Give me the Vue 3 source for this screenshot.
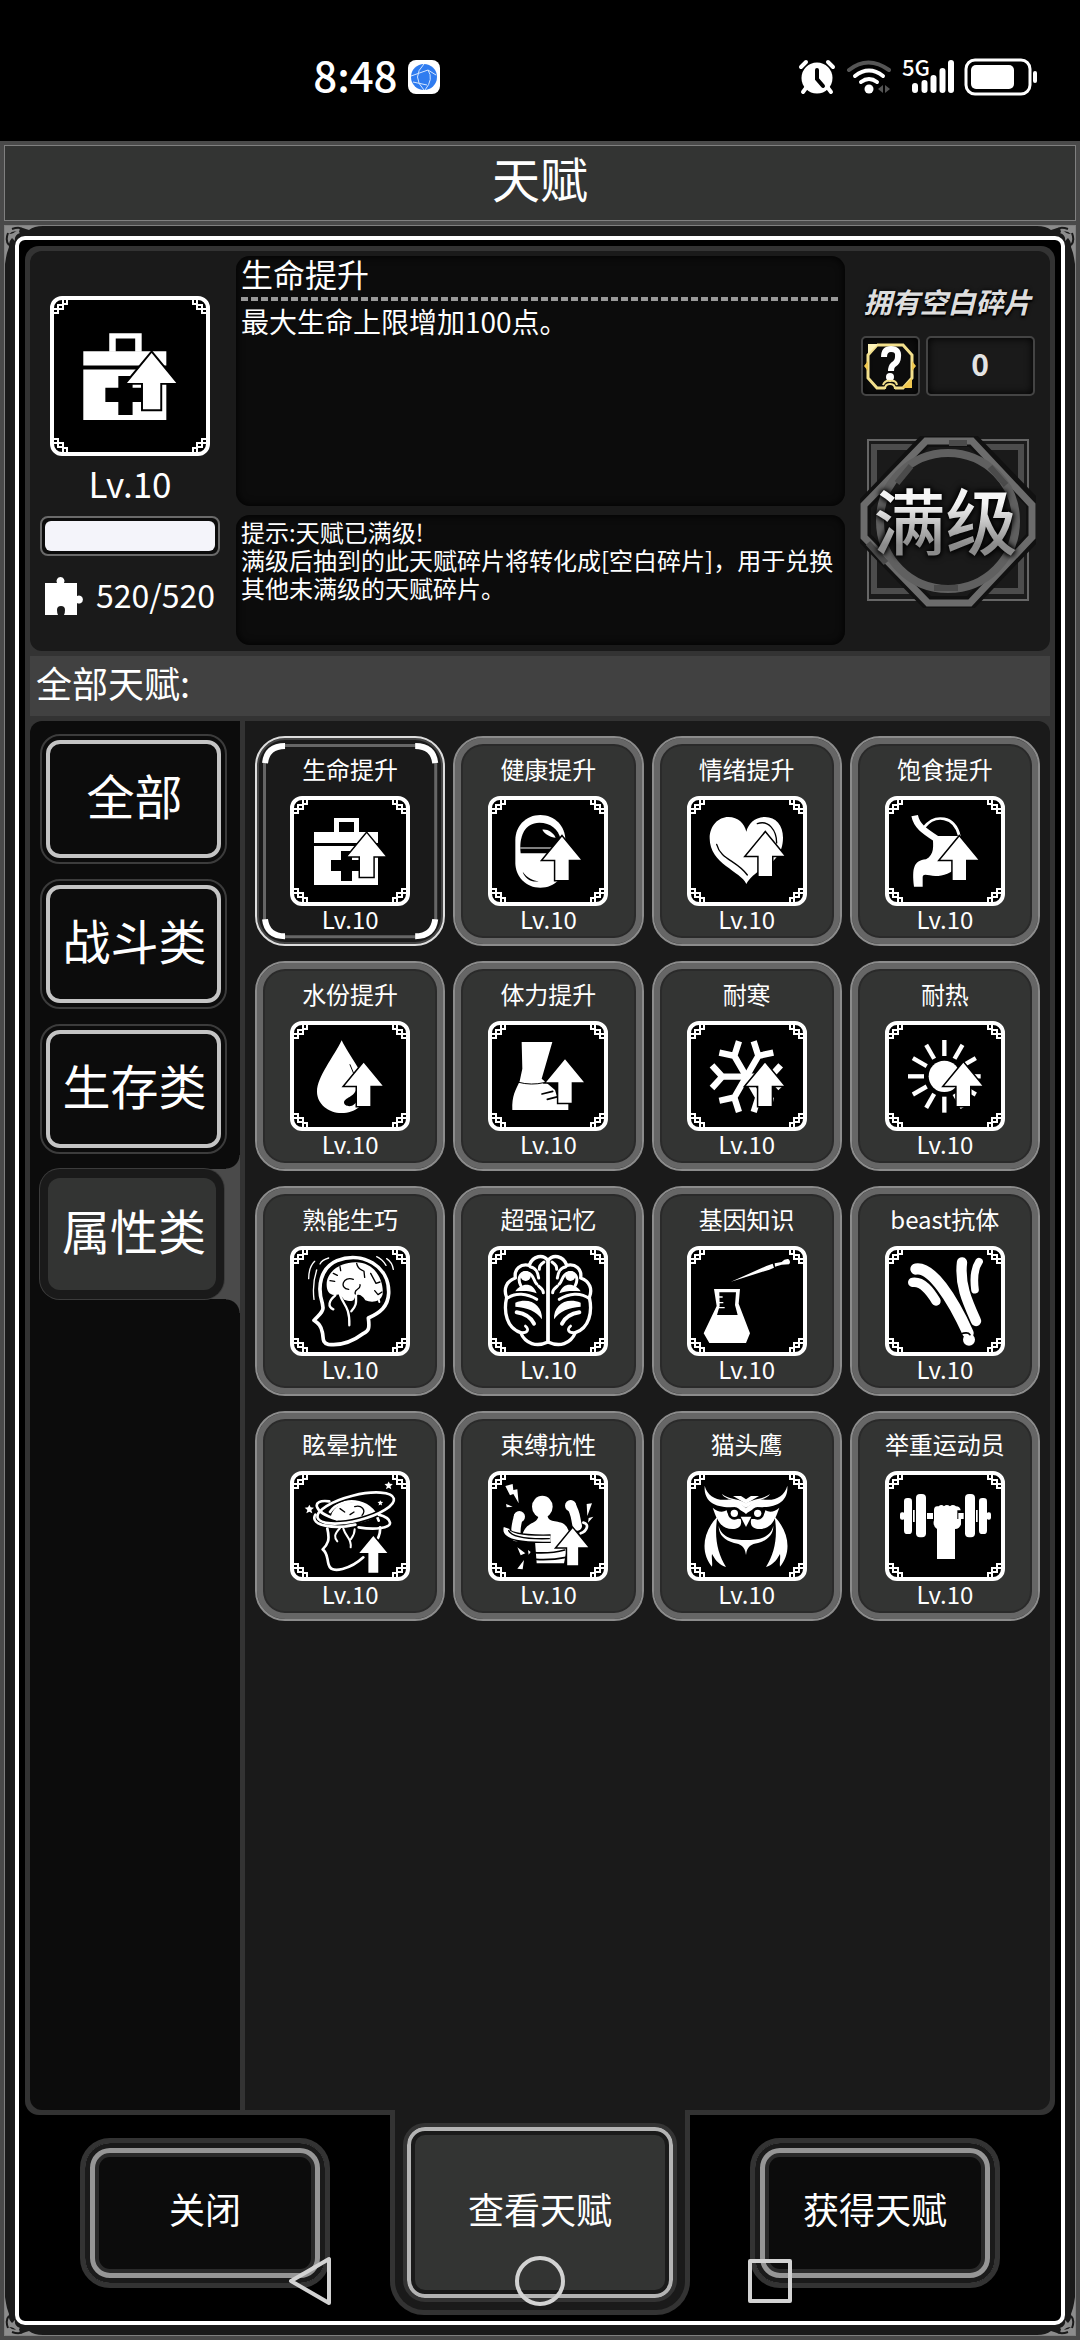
<script setup>
import { ref } from 'vue'

const arrow = (x, y, k = 1, drop = 61) =>
  `<path d="M${x} ${y}l${57 * k} ${69 * k}h${-37 * k}v${drop}h${-40 * k}v${-drop}h${-37 * k}z" fill="#fff" stroke="#000" stroke-width="9" paint-order="stroke"/>`

const mirror = (axis, art) => `${art}<g transform="translate(${axis * 2} 0) scale(-1 1)">${art}</g>`

const line = (d, w, color = '#fff', cap = 'round') =>
  `<path d="${d}" fill="none" stroke="${color}" stroke-width="${w}" stroke-linecap="${cap}" stroke-linejoin="round"/>`

const spin = (count, cx, cy, art) =>
  Array.from({ length: count }, (_, i) => `<g transform="rotate(${(360 / count) * i} ${cx} ${cy})">${art}</g>`).join('')

const medkit = `
  <path fill-rule="evenodd" d="M282 294h75v43h-75zM297 306v31h45v-31z"/>
  <path d="M222 336h192v33H222zM222 378h192v117H222z"/>
  <path fill="#000" d="M303 393h33v27h32v33h-32v30h-33v-30h-30v-33h30z"/>${arrow(380, 340)}`

const pill = `
  <path d="M826 360c0-42 32-75 75-75s75 33 75 75v68c0 42-32 75-75 75s-75-33-75-75z"/>
  <path fill="#000" d="M842 400c-6-50 12-92 56-92 34 0 56 20 64 48v44z"/>
  ${line('M842 384h110', 3)}
  <path d="M907 329c16-2 32 8 40 24-16-2-32-10-40-24z"/>
  <path fill="#000" d="M848 455c14 20 32 26 48 29-20 4-42-8-48-29z"/>${arrow(966, 350)}`

const heart = `
  <path d="M319 492c-16-38-110-60-110-137 0-38 26-64 56-64s48 20 54 44c6-24 26-44 56-44 33 0 54 26 54 62 0 50-30 74-60 92-24 16-40 29-50 47z"/>
  ${line('M230 373c12 46 60 48 92 92', 4, '#000')}
  ${line('M352 311c34-12 58 20 58 58', 4, '#000')}${arrow(376, 338)}`

const stomach = `
  ${line('M824 287c6 30 26 44 66 70', 20, '#fff', 'butt')}
  ${line('M852 322c34-42 92-34 106 26', 8)}
  <path d="M878 348h80v86c-24 26-48 34-72 34-22 0-40-12-38 8v24h-26c-6-54-2-78 36-82 26-14 22-40 20-70z"/>${arrow(958, 350)}`

const drop = `
  <path d="M305 961c24 50 74 106 74 152 0 42-34 66-74 66s-74-28-74-64c0-44 50-104 74-154z"/>
  ${line('M330 1034l10 24', 3, '#000')}
  <path fill="#000" d="M352 1098c-6 34-34 32-40 48-1 16 36 22 42-14z"/>${arrow(371, 1028)}`

const foot = `
  <path d="M845 966h92l-32 110 40 34 12 40 28 2v18H817c-2-42 10-60 22-86l8-38z"/>
  ${line('M836 1087q38 10 76 1', 3, '#000')}
  ${line('M906 1122l32-8M922 1138l32-8', 5, '#000')}${arrow(975, 1018)}`

const snow = `
  ${spin(6, 319, 1070, line('M319 1070h-74M216 1036l31 34-31 34', 19, '#fff', 'butt'))}${arrow(375, 1028)}`

const sun = `
  <circle cx="913" cy="1069" r="47"/>
  ${spin(12, 913, 1069, line('M913 1008v-48', 13, '#fff', 'butt'))}${arrow(970, 1028)}`

const thinker = `
  ${line('M247 400c-16-50-6-106 44-128 76-30 158 16 155 98-2 40-26 58-61 74 4 30 2 38-14 46-32 24-70 38-106 33-20-4-14-22-18-36-4-22-14-28-25-36 12-14 28-24 27-38z', 11)}
  <path d="M260 346c-2-44 46-70 88-69 54 0 84 50 80 96-6 24-34 26-52 18-12-20-24-18-30-14-4 20-14 18-34 12-12-20-18-16-26-14-18 2-26-14-26-29z"/>
  ${line('M286 376c-20 16-24 34-6 42M300 374c8 30 30 34 28 92M348 376c0 18 4 28-14 48', 7)}
  ${line('M340 328c-30-12-44 28-14 30M350 280c4 20 14 18 22 24l2 18M346 372c-6-16 18-12 14-28M392 310l16 30 12-4M280 310l12 6M270 332l14 2M300 290l2 12M404 362l10 12 12-8', 4, '#000')}
  ${line('M224 274c-14 14-18 32-18 52M266 264c-14 4-22 10-26 18M230 300c-10 30-12 56-8 88M410 260c14 6 22 16 28 26M440 266c12 8 18 20 20 32', 4)}
  ${line('M404 376l10 6M416 388l2 8', 6)}`

const cortex = mirror(924, `
  ${line('M924 272c-14-20-46-16-56 14-26-6-46 10-42 38-28 10-36 34-26 58-10 44 0 92 42 106 14 34 48 44 82 28V272', 10)}
  ${line('M842 346c-12-24 2-42 20-38 22 6 18 26 28 34M870 290c20 4 24 18 26 34M912 276c-14 10-14 14-14 22M800 386c26-20 62-16 90 2M896 348c4 6 14 8 14 20', 9)}
  <circle cx="857" cy="318" r="15"/>
  <path d="M826 364c16-24 52-30 64 6-20-8-40-8-64-6zM826 398c44-18 82 8 80 50-18-26-44-34-80-38z"/>
  ${line('M830 427c26 4 42 14 52 34', 12)}
  ${line('M846 488c18 0 22-10 10-20', 8)}`)

const flask = `
  <path d="M222 357h78l-4 44 34 89-12 29H208l-17-29 39-82z"/>
  <path fill="#000" d="M238 367h50l-3 38 8 30h-62l8-28z"/>
  ${line('M236 381h12M236 398h14M234 413h20', 4, '#fff', 'butt')}
  <path d="M273 335l106-47 19-7 4 12-14 6zM404 280l21-4q8-10 20-9 9 8 2 16l-22 1-20 6z"/>`

const antibody = `
  ${line('M828 297c46-8 108 86 156 192', 34)}
  ${line('M818 337c30-4 52 26 70 56', 28)}
  ${line('M966 277c-8 66 16 118 42 176', 31)}
  ${line('M1017 275c-16 24-16 54-12 84', 23)}
  <circle cx="987" cy="509" r="18"/>
  ${line('M962 492c12-4 24-4 28 2', 5, '#000')}`

const star = (x, y, k) =>
  `<path transform="translate(${x} ${y}) scale(${k})" d="M0-12l4 8 10 1-8 7 3 10-9-5-9 5 3-10-8-7 10-1z"/>`

const dizzy = `
  <path d="M272 1040c10-40 50-46 80-42 40 6 54 28 52 44-40 24-100 26-132-2z"/>
  ${line('M344 1010c20-6 36 10 22 26M300 1016l14 10M330 1034l12-8', 4, '#000')}
  ${line('M270 1026c30-46 122-46 146 26M262 1076c8 34 2 46-14 62 16 12 12 26 18 46 8 30 68 12 104-22M420 1072c2 16-2 22-6 32', 8)}
  ${line('M300 1074c-18 20-18 28-8 40M310 1076c8 26 26 30 22 56M344 1078c0 16-6 22-12 30', 6)}
  <ellipse cx="347" cy="1014" rx="118" ry="38" transform="rotate(-14 347 1014)" fill="none" stroke="#000" stroke-width="18"/>
  <ellipse cx="347" cy="1014" rx="118" ry="38" transform="rotate(-14 347 1014)" fill="none" stroke="#fff" stroke-width="8"/>
  ${line('M290 1048c-70-20-80-62-22-54M226 1034c-20 34 60 44 120 30M356 1072c50 8 96 2 94-14-2-14-18-20-34-24', 8)}
  ${star(208, 1016, 1)}${star(446, 945, 0.9)}${star(421, 998, 0.6)}${arrow(400, 1098, 0.74, 59)}`

const bound = `
  <ellipse cx="907" cy="1010" rx="31" ry="33"/>
  <path d="M848 1092c12-40 44-26 48-56h26c4 28 40 10 58 34l10 20-18 90h-82l-6-80z"/>
  ${line('M836 1040c-8 22-10 34-8 60', 28)}
  ${line('M992 1006c16 22 14 40 20 62', 28)}
  <circle cx="838" cy="1040" r="17"/><circle cx="992" cy="1007" r="17"/>
  ${line('M800 1074c-10 24 40 34 132 32', 26, '#000', 'butt')}
  ${line('M800 1074c-8 26 50 34 132 32', 18, '#fff', 'butt')}
  ${line('M806 1082c10 20 56 26 122 24', 4, '#000')}
  ${line('M1030 1058c20 4 10 26-8 32', 8)}
  ${line('M880 1148c34 2 66 0 94-8M888 1168c34 2 60 0 90-6', 5, '#000')}
  <path d="M796 948l22-6 2 18 12-2 4 42-16-28-10 4zM798 1002l20 8-18 2zM1040 1002l16-2-14 38zM1046 1044l14-4-16 18zM832 1196l20-26-4 28zM832 1132l24 18-14 6zM864 1140l8 6-6 8z"/>
  ${arrow(998, 1075, 0.82, 54)}`

const owl = mirror(318, `
  <path d="M194 947c8 30 34 46 68 42 26-2 40 12 56 26v17c-14-12-26-16-42-20-40 0-86-10-82-65z"/>
  <path d="M246 972c8 16 30 12 72 42v-14c-28-16-52-12-72-28z"/>
  <path d="M279 978h24l15 10v13z"/>
  <path d="M218 1013c14 12 28 16 42 8 4 22 20 26 42 26 6 20-6 30-24 30-34 0-46-24-60-64z"/>
  <circle cx="283" cy="1030" r="19" fill="#000"/><circle cx="283" cy="1030" r="11"/>
  <path d="M302 1040h16v31z"/>
  <path d="M232 1040c-46 48-50 110-16 150 2-14-2-24 0-38 12 22 24 34 42 39-26-42-36-90-26-151z"/>
  <path d="M236 1068c10 38 48 42 82 42v45c-4-28-16-32-36-36-28-8-46-24-46-51z"/>`)

const dumbbell = `
  <rect x="780" y="1027" width="14" height="22" rx="6"/><rect x="792" y="984" width="24" height="108" rx="10"/>
  <rect x="819" y="1020" width="5" height="36"/><rect x="828" y="972" width="30" height="130" rx="12"/>
  <rect x="861" y="1029" width="18" height="18"/>
  <path d="M882 1020q0-14 14-11 8-8 16 0 8-8 18 0 8-8 18 0 12 0 14 12h-10v26h11v16q-4 14-18 14v90h-54v-90q-14-10-9-26z"/>
  <rect x="955" y="1029" width="16" height="18"/><rect x="975" y="972" width="30" height="130" rx="12"/>
  <rect x="1008" y="1020" width="5" height="36"/><rect x="1017" y="984" width="24" height="108" rx="10"/>
  <rect x="1040" y="1027" width="13" height="22" rx="6"/>`

const talents = [
  { name: '生命提升', box: '150 228 360 330', art: medkit },
  { name: '健康提升', box: '744 228 360 330', art: pill },
  { name: '情绪提升', box: '141 228 360 330', art: heart },
  { name: '饱食提升', box: '735 228 360 330', art: stomach },
  { name: '水份提升', box: '150 903 360 330', art: drop },
  { name: '体力提升', box: '744 903 360 330', art: foot },
  { name: '耐寒', box: '141 903 360 330', art: snow },
  { name: '耐热', box: '735 903 360 330', art: sun },
  { name: '熟能生巧', box: '150 228 360 330', art: thinker },
  { name: '超强记忆', box: '744 228 360 330', art: cortex },
  { name: '基因知识', box: '141 228 360 330', art: flask },
  { name: 'beast抗体', box: '735 228 360 330', art: antibody },
  { name: '眩晕抗性', box: '150 903 360 330', art: dizzy },
  { name: '束缚抗性', box: '744 903 360 330', art: bound },
  { name: '猫头鹰', box: '141 903 360 330', art: owl },
  { name: '举重运动员', box: '735 903 360 330', art: dumbbell },
]

const categories = ['全部', '战斗类', '生存类', '属性类']
const category = ref('属性类')
const selected = ref(0)
const corners = ['tl', 'tr', 'bl', 'br']
</script>

<template>
  <div class="screen">
    <svg class="defs" aria-hidden="true">
      <symbol id="knot" viewBox="0 0 14 14">
        <path d="M0 9h4V5h5V0M0 13h4V9M9 4h4V0M4 9h5V5" fill="none" stroke="#fff" stroke-width="2" />
      </symbol>
      <symbol id="filigree" viewBox="0 0 38 38">
        <path fill="#8c8c8c" d="M0 0h38q-9 0-14 4-5-2-9-2l-1 4q-6-2-10 2Q9 8 12 4l3 3q-6 2-5 8l-3-3q-4 4-3 9l-2 6Q1 31 0 38z" />
        <path d="M7 3q8-3 12 1M3 7q-3 8 1 12" fill="none" stroke="#1a1a1a" stroke-width="2" />
      </symbol>
    </svg>

    <div class="status">
      <div class="clock">
        <span>8:48</span>
        <svg width="32" height="34" viewBox="0 0 32 34">
          <rect width="32" height="34" rx="8" fill="#fff" />
          <circle cx="16" cy="17" r="13" fill="#2f7cf0" />
          <g fill="none" stroke="#d4e6ff" stroke-width="1"><path d="M16 4q-13 13 0 26M3 16l17-6 8 5M20 10q6 9-3 20M5 22l14 3" /></g>
        </svg>
      </div>
      <div class="signals">
        <svg width="38" height="36" viewBox="0 0 38 36">
          <circle cx="19" cy="19" r="15.500" fill="#fff" />
          <g fill="none" stroke="#fff" stroke-width="4" stroke-linecap="round"><path d="M3 8l5-5M35 8l-5-5M8 29l-3 4M30 29l3 4" /></g>
          <path d="M19 11v9l6 7" fill="none" stroke="#000" stroke-width="4" stroke-linecap="round" />
        </svg>
        <svg width="46" height="36" viewBox="0 0 46 36" fill="none" stroke-width="4" stroke-linecap="round">
          <path d="M3 11q19-15 40 0" stroke="#555" />
          <path d="M9 17q14-11 28 0M15 23q8-6 16 0" stroke="#fff" />
          <circle cx="23" cy="30" r="4.500" fill="#fff" />
          <path fill="#555" d="M37 26v8l-5-4zM39 26v8l5-4z" />
        </svg>
        <div class="cell">
          <span>5G</span>
          <svg width="44" height="36" viewBox="0 0 44 36" stroke="#fff" stroke-width="6" stroke-linecap="round">
            <path d="M5 27v4M14.500 24v7M23.500 19v12M32.500 12v19M41 4v27" />
          </svg>
        </div>
        <svg width="74" height="38" viewBox="0 0 74 38">
          <rect x="2" y="2" width="64" height="34" rx="9" fill="none" stroke="#fff" stroke-width="3" />
          <rect x="7" y="7" width="43" height="24" rx="5" fill="#fff" />
          <path d="M71 15v8" stroke="#fff" stroke-width="4" stroke-linecap="round" />
        </svg>
      </div>
    </div>

    <header class="title"><h1>天赋</h1></header>

    <main class="board">
      <svg v-for="c in corners" :key="c" class="filigree" :class="c"><use href="#filigree" /></svg>
      <div class="rim">
        <div class="panel">
          <section class="info">
            <div class="summary">
              <span class="frame large">
                <svg viewBox="145 208 370 370" fill="#fff"><g v-html="medkit"></g></svg>
                <svg v-for="c in corners" :key="c" class="knot" :class="c"><use href="#knot" /></svg>
              </span>
              <p class="level">Lv.10</p>
              <progress aria-label="天赋碎片" value="520" max="520"></progress>
              <p class="shards">
                <svg width="40" height="40" viewBox="0 0 40 40" fill="#fff">
                  <path d="M0 7h12a4 4 0 1 1 7 0h13v13a4 4 0 1 1 0 7v12H19q1-2 1-5a4 4 0 1 0-8 0q0 3 1 5H0z" />
                </svg>
                <span>520/520</span>
              </p>
            </div>

            <div class="texts">
              <div class="inset detail">
                <h2>生命提升</h2>
                <p>最大生命上限增加100点。</p>
              </div>
              <div class="inset hint">
                <p>提示:天赋已满级!<br />满级后抽到的此天赋碎片将转化成[空白碎片]，用于兑换其他未满级的天赋碎片。</p>
              </div>
            </div>

            <aside class="owned">
              <h3>拥有空白碎片</h3>
              <div class="counter">
                <span class="slot">
                  <svg width="54" height="54" viewBox="0 0 54 54">
                    <g fill="none" stroke="#f3e08c" stroke-width="3"><path d="M14 6h26l9 10v23l-9 10H32M22 49h-8L5 39V16l9-10" /></g>
                    <path fill="#fdf3b8" d="M5 5h10L5 15z" /><path fill="#f0c850" d="M49 49H39l10-10zM5 22v10l-4-5zM49 22v10l4-5z" />
                    <path d="M21 18q0-8 7-8 8 0 7 8 0 5-5 8-2 2-2 6" fill="none" stroke="#fff" stroke-width="6" />
                    <circle cx="27" cy="38" r="4" fill="#fff" />
                    <path d="M20 46q2-5 7-4 6-1 7 4M22 50q0-5 5-5 5 0 5 5" fill="none" stroke="#f3e08c" stroke-width="2" />
                  </svg>
                </span>
                <output class="slot amount">0</output>
              </div>
              <div class="badge">
                <svg viewBox="0 0 176 170">
                  <g fill="none">
                    <path d="M8 3h160v160H8z" stroke="#666" stroke-width="2" />
                    <path d="M14 10h147v144H14z" stroke="#4c4c4c" stroke-width="6" />
                    <path d="M66 3h46l61 63v34l-63 66H68L4 100V68z" fill="#1a1a1a" stroke="#111" stroke-width="14" />
                    <path d="M66 4h46l60 64v32l-62 66H68L4 100V68z" stroke="#6c6c6c" stroke-width="7" />
                    <circle cx="88" cy="84" r="68" stroke="#606060" stroke-width="8" />
                    <path d="M37 46l14-17M89 6h18M130 30l16 18M74 151h24M8 106l18 20" stroke="#4b4b4b" stroke-width="6" />
                  </g>
                </svg>
                <strong>满级</strong>
              </div>
            </aside>
          </section>

          <h2 class="heading">全部天赋:</h2>

          <div class="browser">
            <nav class="tabs" aria-label="天赋分类">
              <button v-for="c in categories" :key="c" type="button" :class="{ active: c === category }" @click="category = c">
                <span>{{ c }}</span>
              </button>
            </nav>
            <div class="list">
              <button v-for="(t, i) in talents" :key="t.name" type="button" class="card" :class="{ selected: i === selected }" @click="selected = i">
                <svg v-if="i === selected" class="marks" viewBox="0 0 190 210" fill="none">
                  <rect x="9.500" y="9.500" width="171" height="191" rx="18" stroke="#666" stroke-width="3" />
                  <path d="M10 27q2-17 20-17M180 27q-2-17-20-17M10 183q2 17 20 17M180 183q-2 17-20 17" stroke="#fff" stroke-width="6" />
                </svg>
                <span class="name">{{ t.name }}</span>
                <span class="frame">
                  <svg :viewBox="t.box" fill="#fff"><g v-html="t.art"></g></svg>
                  <svg v-for="c in corners" :key="c" class="knot" :class="c"><use href="#knot" /></svg>
                </span>
                <span class="rank">Lv.10</span>
              </button>
            </div>
          </div>
        </div>

        <footer class="actions">
          <button type="button" class="action">关闭</button>
          <div class="current"><button type="button">查看天赋</button></div>
          <button type="button" class="action">获得天赋</button>
        </footer>
      </div>
    </main>

    <nav class="system" aria-label="系统导航">
      <button type="button" aria-label="返回">
        <svg width="48" height="52" viewBox="0 0 48 52"><path d="M5 26L43 4v44z" /></svg>
      </button>
      <button type="button" aria-label="主页">
        <svg width="52" height="52" viewBox="0 0 52 52"><circle cx="26" cy="26" r="23" /></svg>
      </button>
      <button type="button" aria-label="最近任务">
        <svg width="48" height="52" viewBox="0 0 48 52"><path d="M4 6h40v40H4z" /></svg>
      </button>
    </nav>
  </div>
</template>

<style>
body {
  margin: 0;
  background: #000;
}
</style>

<style scoped>
* {
  box-sizing: border-box;
}
h1, h2, h3, p {
  margin: 0;
  font-weight: 400;
}
button {
  margin: 0;
  padding: 0;
  border: 0;
  background: none;
  color: inherit;
  font: inherit;
  cursor: pointer;
}
.screen {
  position: relative;
  display: flex;
  flex-direction: column;
  min-height: 100vh;
  background: #4a4a4a;
  color: #fff;
  font-family: "Noto Sans CJK SC", "Noto Sans", sans-serif;
}
svg {
  display: block;
}
.defs {
  position: absolute;
  width: 0;
  height: 0;
}

.status {
  display: flex;
  align-items: center;
  justify-content: space-between;
  height: 141px;
  padding: 12px 42px 0 29%;
  background: #000;
}
.clock, .signals {
  display: flex;
  align-items: center;
  gap: 10px;
}
.clock {
  font-size: 42px;
  line-height: 44px;
  font-weight: 500;
}
.clock span {
  padding-bottom: 6px;
}
.cell {
  position: relative;
  padding-left: 8px;
}
.cell span {
  position: absolute;
  left: 0;
  top: -4px;
  font-size: 22px;
  line-height: 22px;
  font-weight: 500;
}

.title {
  margin: 4px;
  border: 1px solid #808080;
  background: #333433;
  text-align: center;
}
.title h1 {
  padding-bottom: 12px;
  font-size: 48px;
  line-height: 62px;
}

.board {
  position: relative;
  display: flex;
  flex: 1;
  margin: 0 4px 4px;
  padding: 10px;
  border: 1px solid #808080;
  background: #1a1a1a;
}
.filigree {
  position: absolute;
  width: 38px;
  height: 38px;
}
.tl { left: 0; top: 0; }
.tr { right: 0; top: 0; transform: scaleX(-1); }
.bl { left: 0; bottom: 0; transform: scaleY(-1); }
.br { right: 0; bottom: 0; transform: scale(-1, -1); }
.rim {
  position: relative;
  display: flex;
  flex: 1;
  flex-direction: column;
  min-width: 0;
  padding: 6px 6px 0;
  border: 4px solid #fff;
  border-radius: 10px;
  background: #000;
}
.panel {
  display: flex;
  flex: 1;
  flex-direction: column;
  padding: 5px;
  border-radius: 14px;
  background: #333;
}

.info {
  display: flex;
  height: 400px;
  border-radius: 12px;
  background: #1a1a1a;
}
.summary {
  display: flex;
  flex-direction: column;
  align-items: center;
  width: 200px;
  margin-right: 6px;
  padding-top: 45px;
}
.frame {
  position: relative;
  display: block;
  width: 120px;
  height: 110px;
  border: 4px solid #fff;
  border-radius: 12px;
  background: #000;
}
.frame > svg:first-child {
  width: 120px;
  height: 110px;
  margin: -4px;
}
.frame.large, .frame.large > svg:first-child {
  width: 160px;
  height: 160px;
}
.knot {
  position: absolute;
  width: 14px;
  height: 14px;
}
.level {
  margin-top: 5px;
  font-size: 35px;
  line-height: 44px;
}
progress {
  width: 180px;
  height: 40px;
  margin-top: 11px;
  padding: 3px;
  border: 2px solid #6a6a6a;
  border-radius: 8px;
  background: #0c0c0c;
  appearance: none;
}
progress::-webkit-progress-bar {
  background: #0c0c0c;
}
progress::-webkit-progress-value {
  border-radius: 6px;
  background: #f4f4fa;
}
.shards {
  display: flex;
  align-items: center;
  gap: 11px;
  margin-top: 20px;
  font-size: 32px;
  line-height: 36px;
}
.shards span {
  padding-bottom: 4px;
}

.texts {
  display: flex;
  flex: 1;
  flex-direction: column;
  gap: 9px;
  min-width: 0;
  padding: 5px 0 6px;
}
.inset {
  padding: 0 5px;
  border-radius: 14px;
  background: #0c0c0c;
  box-shadow: inset 0 0 8px #000;
}
.detail {
  flex: 1;
}
.detail h2 {
  padding-bottom: 4px;
  font-size: 32px;
  line-height: 34px;
}
.detail h2::after {
  display: block;
  height: 4px;
  margin-top: 7px;
  background: repeating-linear-gradient(90deg, #999 0 7px, transparent 7px 10px);
  content: "";
}
.detail p {
  font-size: 28px;
  line-height: 32px;
}
.hint {
  height: 130px;
  padding-top: 3px;
  font-size: 24px;
  line-height: 28px;
}

.owned {
  display: flex;
  flex-direction: column;
  align-items: center;
  width: 205px;
  padding-top: 32px;
}
.owned h3 {
  color: #ddd;
  font-size: 28px;
  font-style: italic;
  font-weight: 700;
  line-height: 36px;
  text-shadow: 0 2px 2px #000, 0 0 4px #000;
}
.counter {
  display: flex;
  gap: 6px;
  margin-top: 17px;
}
.slot {
  display: grid;
  width: 59px;
  height: 60px;
  place-items: center;
  border: 2px solid #444;
  border-radius: 5px;
  background: #0c0c0c;
  box-shadow: inset 0 0 8px #000;
}
.amount {
  width: 109px;
  padding-bottom: 6px;
  background: #1a1a1a;
  color: #e4e4e4;
  font-size: 30px;
  font-weight: 700;
}
.badge {
  display: grid;
  width: 176px;
  margin-top: 40px;
  place-items: center;
}
.badge svg, .badge strong {
  grid-area: 1 / 1;
}
.badge svg {
  width: 176px;
  height: 172px;
}
.badge strong {
  padding: 0 4px 8px 0;
  background: linear-gradient(#f4f4f4 30%, #8a8a8a 75%);
  background-clip: text;
  color: transparent;
  filter: drop-shadow(0 0 3px #000) drop-shadow(0 0 2px #000);
  font-size: 72px;
  font-weight: 500;
  line-height: 84px;
  white-space: nowrap;
}

.heading {
  margin: 5px 0;
  padding: 0 6px 8px;
  background: #414141;
  font-size: 36px;
  line-height: 52px;
}

.browser {
  display: flex;
  flex: 1;
  gap: 5px;
}
.tabs {
  position: relative;
  z-index: 0;
  display: flex;
  flex-direction: column;
  gap: 15px;
  width: 210px;
  padding: 13px 13px 0 10px;
  border-radius: 12px 0 0 12px;
  background: #0c0c0c;
}
.tabs button {
  position: relative;
  height: 130px;
  padding: 4px;
  border: 2px solid #3c3c3c;
  border-radius: 20px;
  background: #0c0c0c;
  font-size: 48px;
  white-space: nowrap;
}
.tabs button span {
  display: flex;
  align-items: center;
  justify-content: center;
  height: 100%;
  padding: 0 0 10px 2px;
  border: 4px solid #c4c4c4;
  border-radius: 14px;
  line-height: 60px;
}
.tabs .active {
  margin-right: 3px;
  padding: 9px 8px;
  border: 0;
  background: #1a1a1a;
  box-shadow: 0 0 0 1px #3c3c3c;
}
.tabs .active span {
  padding-left: 4px;
  border: 0;
  border-radius: 12px;
  background: #333433;
}
.tabs .active::before {
  position: absolute;
  z-index: -1;
  top: -14px;
  right: -16px;
  bottom: -14px;
  width: 40px;
  background:
    radial-gradient(circle at 0 0, transparent 13px, #4a4a4a 14px) right top / 14px 14px no-repeat,
    radial-gradient(circle at 0 100%, transparent 13px, #4a4a4a 14px) right bottom / 14px 14px no-repeat,
    linear-gradient(#4a4a4a, #4a4a4a) center / 100% calc(100% - 28px) no-repeat;
  content: "";
}

.list {
  display: grid;
  flex: 1;
  grid-template-columns: repeat(4, 1fr);
  gap: 15px 8px;
  align-content: start;
  padding: 15px 10px;
  border-radius: 0 12px 12px 0;
  background: #1a1a1a;
}
.card {
  position: relative;
  display: flex;
  flex-direction: column;
  align-items: center;
  height: 210px;
  padding-top: 15px;
  border: 2px solid #8c8c8c;
  border-radius: 30px;
  background: #333433;
  box-shadow: inset 0 0 0 6px #666, inset 0 0 0 8px #2a2a2a;
}
.card.selected {
  border-color: #ddd;
  background: #1a1a1a;
  box-shadow: inset 0 0 0 2px #444;
}
.marks {
  position: absolute;
  inset: -2px;
}
.name {
  margin-bottom: 11px;
  font-size: 24px;
  line-height: 32px;
  white-space: nowrap;
}
.rank {
  font-size: 24px;
  line-height: 26px;
}

.actions {
  position: relative;
  display: flex;
  justify-content: space-between;
  margin-top: -5px;
  padding: 0 55px 6px;
}
.action {
  width: 250px;
  height: 150px;
  margin-top: 28px;
  border: 5px solid #333;
  border-radius: 30px;
  background: #0c0c0c;
  box-shadow: inset 0 0 0 5px #1a1a1a, inset 0 0 0 10px #969696, inset 0 0 0 14px #2a2a2a;
  font-size: 36px;
}
.current {
  width: 300px;
  padding: 13px 8px 8px;
  border: 5px solid #333;
  border-top: 0;
  border-radius: 0 0 34px 34px;
  background: #1a1a1a;
}
.current button {
  width: 100%;
  height: 179px;
  border: 4px solid #333;
  border-radius: 22px;
  background: #333433;
  box-shadow: inset 0 0 0 4px #b4b4b4, inset 0 0 0 8px #1a1a1a;
  font-size: 36px;
}
.current button, .action {
  padding-bottom: 10px;
}

.system {
  position: absolute;
  right: 0;
  bottom: 33px;
  left: 0;
  display: flex;
  justify-content: center;
  gap: 180px;
}
.system path, .system circle {
  fill: none;
  stroke: #d2d2d2;
  stroke-linejoin: round;
  stroke-width: 4px;
}
</style>
